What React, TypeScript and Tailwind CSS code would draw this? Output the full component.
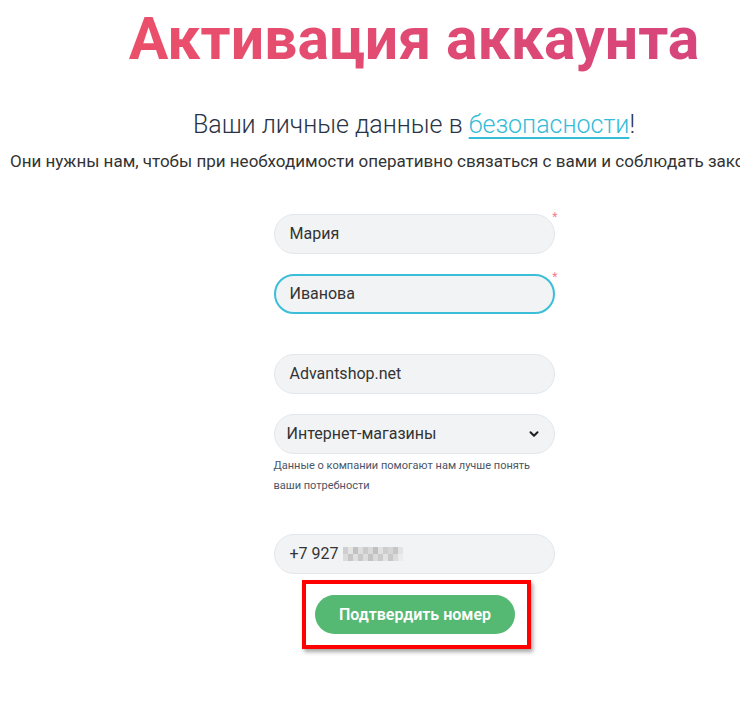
import { ChevronDown } from "lucide-react";

const font = { fontFamily: "Roboto, 'Noto Sans', sans-serif" };

function Field({ value, required, focused }: { value: string; required?: boolean; focused?: boolean }) {
  return (
    <div className="relative w-[281px]">
      <div
        className={
          "flex h-10 items-center rounded-full bg-[#f2f3f5] px-4 text-base text-[#333] " +
          (focused ? "border-2 border-[#3bbfd9] pl-[14px]" : "border border-[#e3e6eb] pl-[15px]")
        }
      >
        {value}
      </div>
      {required && <span className="absolute -right-[3px] -top-[3px] text-xs leading-none text-[#f07e93]">*</span>}
    </div>
  );
}

function Blurred() {
  const top = ["#cfcfcf", "#e4e4e4", "#c2c2c2", "#dedede", "#cbcbcb", "#d9d9d9", "#c0c0c0", "#e1e1e1", "#cdcdcd", "#d6d6d6", "#c6c6c6", "#e3e3e3"];
  const bottom = ["#dcdcdc", "#c6c6c6", "#e0e0e0", "#c9c9c9", "#dddddd", "#c3c3c3", "#dadada", "#cacaca", "#e2e2e2", "#c8c8c8", "#dbdbdb", "#ebebeb"];
  return (
    <span className="ml-[1px] inline-flex flex-col">
      <span className="flex h-[7px]">
        {top.map((c, i) => (
          <span key={i} className="w-[5px]" style={{ backgroundColor: c }} />
        ))}
      </span>
      <span className="flex h-[7px]">
        {bottom.map((c, i) => (
          <span key={i} className="w-[5px]" style={{ backgroundColor: c }} />
        ))}
      </span>
    </span>
  );
}

export default function App() {
  return (
    <div className="h-[702px] w-[740px] overflow-hidden bg-white" style={font}>
      <div className="flex w-[828px] flex-col items-center">
        <h1 className="mt-[4px] bg-gradient-to-r from-[#eb506a] to-[#d6457b] bg-clip-text text-[59px] font-bold leading-[70px] text-transparent">
          Активация аккаунта
        </h1>
        <p className="mt-[37px] text-[25px] font-light leading-7 text-[#2a3345]">
          Ваши личные данные в{" "}
          <span className="text-[#35bcd8] underline decoration-[2px] underline-offset-[4px]">безопасности</span>!
        </p>
        <p className="mt-[12px] self-start whitespace-nowrap pl-[10px] text-[17px] leading-5 text-[#333]">
          Они нужны нам, чтобы при необходимости оперативно связаться с вами и соблюдать законодательство РФ.
        </p>

        <div className="mt-[43px] flex flex-col items-center">
          <Field value="Мария" required />
          <div className="mt-5">
            <Field value="Иванова" required focused />
          </div>
          <div className="mt-[40px]">
            <Field value="Advantshop.net" />
          </div>
          <div className="mt-[20px] w-[281px]">
            <div className="flex h-10 items-center justify-between rounded-full border border-[#e3e6eb] bg-[#f2f3f5] pl-3 pr-[13px] text-base text-[#333]">
              <span>Интернет-магазины</span>
              <ChevronDown className="h-[14px] w-[14px] text-[#222]" strokeWidth={3.5} />
            </div>
            <p className="mt-[2px] text-[11px] leading-5 text-[#4a5566]">
              Данные о компании помогают нам лучше понять
              <br />
              ваши потребности
            </p>
          </div>
          <div className="mt-[38px] w-[281px]">
            <div className="flex h-10 items-center rounded-full border border-[#e3e6eb] bg-[#f2f3f5] pl-[15px] text-base text-[#333]">
              <span className="whitespace-pre">+7 927 </span>
              <Blurred />
            </div>
          </div>
          <div className="ml-[4px] mt-[6px] flex h-[69px] w-[229px] items-center justify-center border-4 border-[#ff0000] shadow-[2px_3px_4px_rgba(0,0,0,0.35)]">
            <button className="-ml-[2px] h-[39px] w-[200px] rounded-full bg-[#55b873] text-base font-semibold text-white">
              Подтвердить номер
            </button>
          </div>
        </div>
      </div>
    </div>
  );
}
